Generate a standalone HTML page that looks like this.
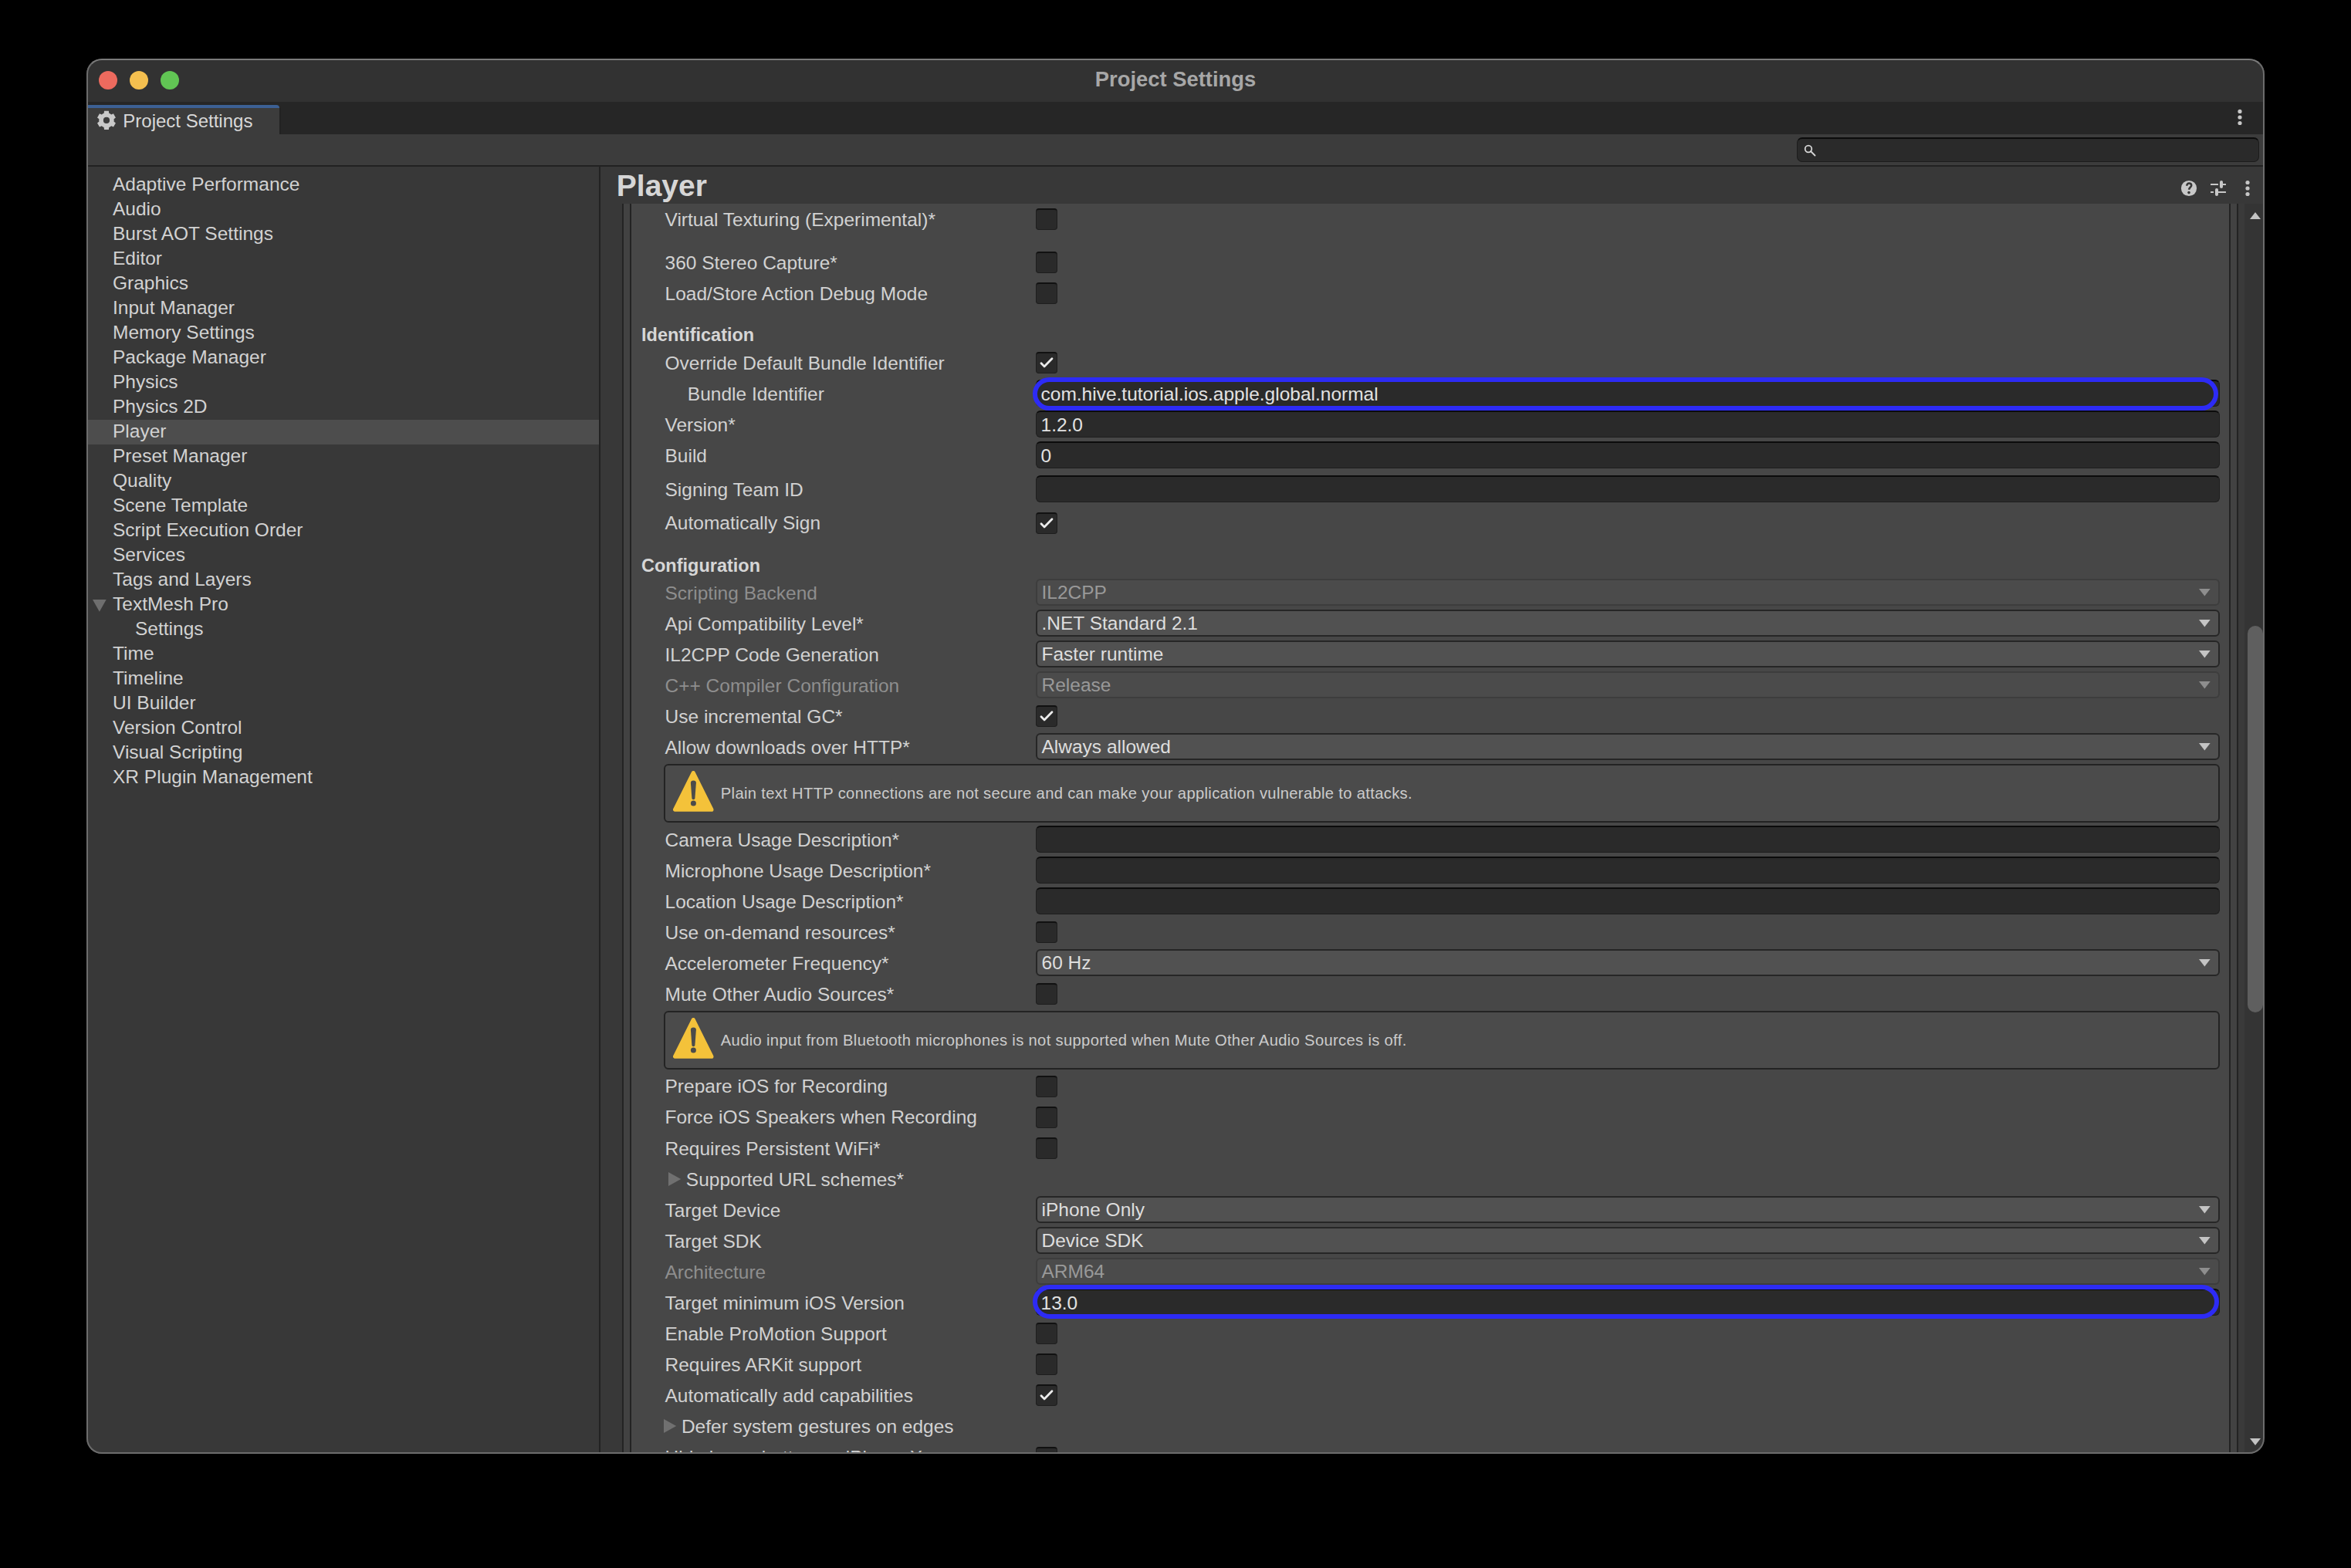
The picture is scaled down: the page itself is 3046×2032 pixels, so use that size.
<!DOCTYPE html>
<html><head><meta charset="utf-8"><style>
html,body{margin:0;padding:0;background:#000;width:3046px;height:2032px;overflow:hidden;font-family:'Liberation Sans', sans-serif;}
#win{position:absolute;left:0;top:0;width:3046px;height:2032px;overflow:hidden;}
#clip{position:absolute;left:112px;top:76px;width:2822px;height:1808px;border-radius:20px;overflow:hidden;}
#inner{position:absolute;left:-112px;top:-76px;width:3046px;height:2032px;}
#border{position:absolute;left:112px;top:76px;width:2822px;height:1808px;box-sizing:border-box;border:2px solid #6c6c6c;border-top-color:#7a7a7a;border-radius:20px;pointer-events:none;}
</style></head><body>
<div id="win"><div id="clip"><div id="inner">
<div style="position:absolute;left:112px;top:76px;width:2822px;height:56px;background:#323232;"></div>
<div style="position:absolute;left:127.8px;top:91.8px;width:24.4px;height:24.4px;border-radius:50%;background:#ed6a5e"></div>
<div style="position:absolute;left:167.8px;top:91.8px;width:24.4px;height:24.4px;border-radius:50%;background:#f4bf4f"></div>
<div style="position:absolute;left:207.8px;top:91.8px;width:24.4px;height:24.4px;border-radius:50%;background:#61c554"></div>
<div style="position:absolute;left:112px;width:2822px;top:82.64px;text-align:center;font-weight:bold;font-size:27.4px;line-height:40px;color:#a7a7a7">Project Settings</div>
<div style="position:absolute;left:112px;top:132px;width:2822px;height:42px;background:#262626;"></div>
<div style="position:absolute;left:362px;top:140px;width:2px;height:34px;background:#222222;"></div>
<div style="position:absolute;left:114px;top:136px;width:248px;height:38px;background:#3c3c3c;border-top:4px solid #3c6094;box-sizing:border-box;border-top-right-radius:4px;"></div>
<svg style="position:absolute;left:125px;top:143px" width="26" height="26" viewBox="-12.96 -12.9 26 26"><polygon points="-3.30,-9.12 -2.95,-12.10 2.95,-12.10 3.30,-9.12 3.70,-8.97 4.09,-8.80 4.47,-8.61 4.85,-8.40 5.22,-8.18 5.57,-7.94 5.92,-7.69 6.25,-7.42 9.00,-8.60 11.95,-3.50 9.55,-1.70 9.62,-1.28 9.66,-0.85 9.69,-0.43 9.70,0.00 9.69,0.43 9.66,0.85 9.62,1.28 9.55,1.70 11.95,3.50 9.00,8.60 6.25,7.42 5.92,7.69 5.57,7.94 5.22,8.18 4.85,8.40 4.47,8.61 4.09,8.80 3.70,8.97 3.30,9.12 2.95,12.10 -2.95,12.10 -3.30,9.12 -3.70,8.97 -4.09,8.80 -4.47,8.61 -4.85,8.40 -5.22,8.18 -5.57,7.94 -5.92,7.69 -6.25,7.42 -9.00,8.60 -11.95,3.50 -9.55,1.70 -9.62,1.28 -9.66,0.85 -9.69,0.43 -9.70,0.00 -9.69,-0.43 -9.66,-0.85 -9.62,-1.28 -9.55,-1.70 -11.95,-3.50 -9.00,-8.60 -6.25,-7.42 -5.92,-7.69 -5.57,-7.94 -5.22,-8.18 -4.85,-8.40 -4.47,-8.61 -4.09,-8.80 -3.70,-8.97" fill="#c9c9c9"/><circle r="4.1" fill="#3c3c3c"/></svg>
<div style="position:absolute;left:159.3px;top:136.68px;font-weight:normal;font-size:24px;line-height:40px;color:#d8d8d8;white-space:nowrap;">Project Settings</div>
<svg style="position:absolute;left:2896px;top:138px" width="12" height="28" viewBox="0 0 12 28" fill="#c6c6c6"><circle cx="6" cy="6.4" r="2.6"/><circle cx="6" cy="14" r="2.6"/><circle cx="6" cy="21.5" r="2.6"/></svg>
<div style="position:absolute;left:112px;top:174px;width:2822px;height:40px;background:#3c3c3c;"></div>
<div style="position:absolute;left:2328px;top:178px;width:599px;height:32px;box-sizing:border-box;background:#2a2a2a;border:1.5px solid #1c1c1c;border-top:2px solid #0b0b0b;border-radius:7px"></div>
<svg style="position:absolute;left:2334px;top:184px" width="22" height="22" viewBox="0 0 22 22"><circle cx="9" cy="9" r="4.3" fill="none" stroke="#d6d6d6" stroke-width="1.8"/><line x1="12" y1="12" x2="17.5" y2="17.5" stroke="#d6d6d6" stroke-width="1.8" stroke-linecap="round"/></svg>
<div style="position:absolute;left:112px;top:214px;width:2822px;height:2px;background:#222222;"></div>
<div style="position:absolute;left:112px;top:216px;width:664px;height:1668px;background:#383838;"></div>
<div style="position:absolute;left:776px;top:216px;width:2px;height:1668px;background:#222222;"></div>
<div style="position:absolute;left:146px;top:218.51px;font-weight:normal;font-size:24.5px;line-height:40px;color:#d2d2d2;white-space:nowrap;">Adaptive Performance</div>
<div style="position:absolute;left:146px;top:250.51px;font-weight:normal;font-size:24.5px;line-height:40px;color:#d2d2d2;white-space:nowrap;">Audio</div>
<div style="position:absolute;left:146px;top:282.51px;font-weight:normal;font-size:24.5px;line-height:40px;color:#d2d2d2;white-space:nowrap;">Burst AOT Settings</div>
<div style="position:absolute;left:146px;top:314.51px;font-weight:normal;font-size:24.5px;line-height:40px;color:#d2d2d2;white-space:nowrap;">Editor</div>
<div style="position:absolute;left:146px;top:346.51px;font-weight:normal;font-size:24.5px;line-height:40px;color:#d2d2d2;white-space:nowrap;">Graphics</div>
<div style="position:absolute;left:146px;top:378.51px;font-weight:normal;font-size:24.5px;line-height:40px;color:#d2d2d2;white-space:nowrap;">Input Manager</div>
<div style="position:absolute;left:146px;top:410.51px;font-weight:normal;font-size:24.5px;line-height:40px;color:#d2d2d2;white-space:nowrap;">Memory Settings</div>
<div style="position:absolute;left:146px;top:442.51px;font-weight:normal;font-size:24.5px;line-height:40px;color:#d2d2d2;white-space:nowrap;">Package Manager</div>
<div style="position:absolute;left:146px;top:474.51px;font-weight:normal;font-size:24.5px;line-height:40px;color:#d2d2d2;white-space:nowrap;">Physics</div>
<div style="position:absolute;left:146px;top:506.51px;font-weight:normal;font-size:24.5px;line-height:40px;color:#d2d2d2;white-space:nowrap;">Physics 2D</div>
<div style="position:absolute;left:112px;top:544px;width:664px;height:32px;background:#4d4d4d;"></div>
<div style="position:absolute;left:146px;top:538.51px;font-weight:normal;font-size:24.5px;line-height:40px;color:#d2d2d2;white-space:nowrap;">Player</div>
<div style="position:absolute;left:146px;top:570.51px;font-weight:normal;font-size:24.5px;line-height:40px;color:#d2d2d2;white-space:nowrap;">Preset Manager</div>
<div style="position:absolute;left:146px;top:602.51px;font-weight:normal;font-size:24.5px;line-height:40px;color:#d2d2d2;white-space:nowrap;">Quality</div>
<div style="position:absolute;left:146px;top:634.51px;font-weight:normal;font-size:24.5px;line-height:40px;color:#d2d2d2;white-space:nowrap;">Scene Template</div>
<div style="position:absolute;left:146px;top:666.51px;font-weight:normal;font-size:24.5px;line-height:40px;color:#d2d2d2;white-space:nowrap;">Script Execution Order</div>
<div style="position:absolute;left:146px;top:698.51px;font-weight:normal;font-size:24.5px;line-height:40px;color:#d2d2d2;white-space:nowrap;">Services</div>
<div style="position:absolute;left:146px;top:730.51px;font-weight:normal;font-size:24.5px;line-height:40px;color:#d2d2d2;white-space:nowrap;">Tags and Layers</div>
<div style="position:absolute;left:146px;top:762.51px;font-weight:normal;font-size:24.5px;line-height:40px;color:#d2d2d2;white-space:nowrap;">TextMesh Pro</div>
<svg style="position:absolute;left:120px;top:777px" width="18" height="16" viewBox="0 0 18 16"><polygon points="0,0 17.7,0 8.85,15.7" fill="#6e6e6e"/></svg>
<div style="position:absolute;left:175px;top:794.51px;font-weight:normal;font-size:24.5px;line-height:40px;color:#d2d2d2;white-space:nowrap;">Settings</div>
<div style="position:absolute;left:146px;top:826.51px;font-weight:normal;font-size:24.5px;line-height:40px;color:#d2d2d2;white-space:nowrap;">Time</div>
<div style="position:absolute;left:146px;top:858.51px;font-weight:normal;font-size:24.5px;line-height:40px;color:#d2d2d2;white-space:nowrap;">Timeline</div>
<div style="position:absolute;left:146px;top:890.51px;font-weight:normal;font-size:24.5px;line-height:40px;color:#d2d2d2;white-space:nowrap;">UI Builder</div>
<div style="position:absolute;left:146px;top:922.51px;font-weight:normal;font-size:24.5px;line-height:40px;color:#d2d2d2;white-space:nowrap;">Version Control</div>
<div style="position:absolute;left:146px;top:954.51px;font-weight:normal;font-size:24.5px;line-height:40px;color:#d2d2d2;white-space:nowrap;">Visual Scripting</div>
<div style="position:absolute;left:146px;top:986.51px;font-weight:normal;font-size:24.5px;line-height:40px;color:#d2d2d2;white-space:nowrap;">XR Plugin Management</div>
<div style="position:absolute;left:778px;top:216px;width:2154px;height:48px;background:#383838;"></div>
<div style="position:absolute;left:798.8px;top:221.49px;font-weight:bold;font-size:39px;line-height:40px;color:#d6d6d6;white-space:nowrap;">Player</div>
<svg style="position:absolute;left:2825px;top:233px" width="22" height="22" viewBox="0 0 22 22"><circle cx="11" cy="11" r="10.1" fill="#c8c8c8"/><path d="M8.3 7.7 C8.3 5.6 9.6 4.5 11.2 4.5 C13.0 4.5 14.2 5.7 14.2 7.3 C14.2 9.3 11.7 10.0 11.0 12.8" fill="none" stroke="#373737" stroke-width="2.6" stroke-linecap="butt"/><circle cx="11" cy="16.6" r="1.8" fill="#373737"/></svg>
<svg style="position:absolute;left:2863px;top:233px" width="22" height="22" viewBox="0 0 22 22" fill="#c8c8c8"><rect x="1" y="5" width="10" height="2" rx="0.5"/><rect x="13" y="1" width="4" height="10" rx="2"/><rect x="16" y="5" width="5" height="2" rx="0.5"/><rect x="1" y="15" width="4" height="2" rx="0.5"/><rect x="7" y="11" width="4" height="10" rx="2"/><rect x="10" y="15" width="11" height="2" rx="0.5"/></svg>
<svg style="position:absolute;left:2906px;top:230px" width="12" height="28" viewBox="0 0 12 28" fill="#c6c6c6"><circle cx="6" cy="6.5" r="2.6"/><circle cx="6" cy="14" r="2.6"/><circle cx="6" cy="21.5" r="2.6"/></svg>
<div style="position:absolute;left:778px;top:264px;width:28px;height:1620px;background:#383838;"></div>
<div style="position:absolute;left:806px;top:264px;width:2px;height:1620px;background:#232323;"></div>
<div style="position:absolute;left:808px;top:264px;width:8px;height:1620px;background:#424242;"></div>
<div style="position:absolute;left:816px;top:264px;width:2px;height:1620px;background:#232323;"></div>
<div style="position:absolute;left:818px;top:264px;width:2070px;height:1620px;background:#474747;"></div>
<div style="position:absolute;left:2888px;top:264px;width:2px;height:1620px;background:#232323;"></div>
<div style="position:absolute;left:2890px;top:264px;width:8px;height:1620px;background:#424242;"></div>
<div style="position:absolute;left:2898px;top:264px;width:2px;height:1620px;background:#232323;"></div>
<div style="position:absolute;left:2900px;top:264px;width:8px;height:1620px;background:#3a3a3a;"></div>
<div style="position:absolute;left:2908px;top:264px;width:24px;height:1620px;background:#343434;"></div>
<div style="position:absolute;left:2912px;top:811px;width:20px;height:501px;border-radius:10px;background:#5f5f5f"></div>
<svg style="position:absolute;left:2915px;top:275px" width="14" height="9" viewBox="0 0 14 9"><polygon points="7,0 14,9 0,9" fill="#c4c4c4"/></svg>
<svg style="position:absolute;left:2915px;top:1864px" width="14" height="9" viewBox="0 0 14 9"><polygon points="0,0 14,0 7,9" fill="#c4c4c4"/></svg>
<div style="position:absolute;left:861.5px;top:264.51px;font-weight:normal;font-size:24.5px;line-height:40px;color:#d2d2d2;white-space:nowrap;">Virtual Texturing (Experimental)*</div>
<div style="position:absolute;left:1342px;top:270px;width:28px;height:28px;box-sizing:border-box;background:#2a2a2a;border:1.5px solid #1e1e1e;border-top:2px solid #111;border-radius:4px"></div>
<div style="position:absolute;left:861.5px;top:320.51px;font-weight:normal;font-size:24.5px;line-height:40px;color:#d2d2d2;white-space:nowrap;">360 Stereo Capture*</div>
<div style="position:absolute;left:1342px;top:326px;width:28px;height:28px;box-sizing:border-box;background:#2a2a2a;border:1.5px solid #1e1e1e;border-top:2px solid #111;border-radius:4px"></div>
<div style="position:absolute;left:861.5px;top:360.51px;font-weight:normal;font-size:24.5px;line-height:40px;color:#d2d2d2;white-space:nowrap;">Load/Store Action Debug Mode</div>
<div style="position:absolute;left:1342px;top:366px;width:28px;height:28px;box-sizing:border-box;background:#2a2a2a;border:1.5px solid #1e1e1e;border-top:2px solid #111;border-radius:4px"></div>
<div style="position:absolute;left:831px;top:413.86px;font-weight:bold;font-size:23.5px;line-height:40px;color:#d6d6d6;white-space:nowrap;">Identification</div>
<div style="position:absolute;left:861.5px;top:450.51px;font-weight:normal;font-size:24.5px;line-height:40px;color:#d2d2d2;white-space:nowrap;">Override Default Bundle Identifier</div>
<div style="position:absolute;left:1342px;top:456px;width:28px;height:28px;box-sizing:border-box;background:#2a2a2a;border:1.5px solid #1e1e1e;border-top:2px solid #111;border-radius:4px"></div>
<svg style="position:absolute;left:1342px;top:456px" width="28" height="28" viewBox="0 0 28 28"><polyline points="7.0,14.7 11.0,18.9 21.0,8.8" fill="none" stroke="#ececec" stroke-width="2.8" stroke-linecap="round" stroke-linejoin="round"/></svg>
<div style="position:absolute;left:890.8px;top:490.51px;font-weight:normal;font-size:24.5px;line-height:40px;color:#d2d2d2;white-space:nowrap;">Bundle Identifier</div>
<div style="position:absolute;left:1342px;top:492px;width:1534px;height:35px;box-sizing:border-box;background:#2a2a2a;border:1.5px solid #1e1e1e;border-top:2px solid #0b0b0b;border-radius:6px"></div>
<div style="position:absolute;left:1348.5px;top:490.51px;font-weight:normal;font-size:24.5px;line-height:40px;color:#e2e2e2;white-space:nowrap;">com.hive.tutorial.ios.apple.global.normal</div>
<div style="position:absolute;left:861.5px;top:530.51px;font-weight:normal;font-size:24.5px;line-height:40px;color:#d2d2d2;white-space:nowrap;">Version*</div>
<div style="position:absolute;left:1342px;top:532px;width:1534px;height:35px;box-sizing:border-box;background:#2a2a2a;border:1.5px solid #1e1e1e;border-top:2px solid #0b0b0b;border-radius:6px"></div>
<div style="position:absolute;left:1348.5px;top:530.51px;font-weight:normal;font-size:24.5px;line-height:40px;color:#e2e2e2;white-space:nowrap;">1.2.0</div>
<div style="position:absolute;left:861.5px;top:570.51px;font-weight:normal;font-size:24.5px;line-height:40px;color:#d2d2d2;white-space:nowrap;">Build</div>
<div style="position:absolute;left:1342px;top:572px;width:1534px;height:35px;box-sizing:border-box;background:#2a2a2a;border:1.5px solid #1e1e1e;border-top:2px solid #0b0b0b;border-radius:6px"></div>
<div style="position:absolute;left:1348.5px;top:570.51px;font-weight:normal;font-size:24.5px;line-height:40px;color:#e2e2e2;white-space:nowrap;">0</div>
<div style="position:absolute;left:861.5px;top:614.51px;font-weight:normal;font-size:24.5px;line-height:40px;color:#d2d2d2;white-space:nowrap;">Signing Team ID</div>
<div style="position:absolute;left:1342px;top:616px;width:1534px;height:35px;box-sizing:border-box;background:#2a2a2a;border:1.5px solid #1e1e1e;border-top:2px solid #0b0b0b;border-radius:6px"></div>
<div style="position:absolute;left:861.5px;top:658.01px;font-weight:normal;font-size:24.5px;line-height:40px;color:#d2d2d2;white-space:nowrap;">Automatically Sign</div>
<div style="position:absolute;left:1342px;top:664px;width:28px;height:28px;box-sizing:border-box;background:#2a2a2a;border:1.5px solid #1e1e1e;border-top:2px solid #111;border-radius:4px"></div>
<svg style="position:absolute;left:1342px;top:664px" width="28" height="28" viewBox="0 0 28 28"><polyline points="7.0,14.7 11.0,18.9 21.0,8.8" fill="none" stroke="#ececec" stroke-width="2.8" stroke-linecap="round" stroke-linejoin="round"/></svg>
<div style="position:absolute;left:831px;top:712.86px;font-weight:bold;font-size:23.5px;line-height:40px;color:#d6d6d6;white-space:nowrap;">Configuration</div>
<div style="position:absolute;left:861.5px;top:748.51px;font-weight:normal;font-size:24.5px;line-height:40px;color:#8e8e8e;white-space:nowrap;">Scripting Backend</div>
<div style="position:absolute;left:1342px;top:750px;width:1534px;height:35px;box-sizing:border-box;background:#4b4b4b;border:2px solid #3d3d3d;border-radius:6px"></div>
<div style="position:absolute;left:1349.5px;top:747.51px;font-weight:normal;font-size:24.5px;line-height:40px;color:#999999;white-space:nowrap;">IL2CPP</div>
<svg style="position:absolute;left:2849px;top:763px" width="15" height="10" viewBox="0 0 15 10"><polygon points="0,0 14.7,0 7.35,9.4" fill="#8e8e8e"/></svg>
<div style="position:absolute;left:861.5px;top:788.51px;font-weight:normal;font-size:24.5px;line-height:40px;color:#d2d2d2;white-space:nowrap;">Api Compatibility Level*</div>
<div style="position:absolute;left:1342px;top:790px;width:1534px;height:35px;box-sizing:border-box;background:#515151;border:2px solid #262626;border-radius:6px"></div>
<div style="position:absolute;left:1349.5px;top:787.51px;font-weight:normal;font-size:24.5px;line-height:40px;color:#dedede;white-space:nowrap;">.NET Standard 2.1</div>
<svg style="position:absolute;left:2849px;top:803px" width="15" height="10" viewBox="0 0 15 10"><polygon points="0,0 14.7,0 7.35,9.4" fill="#c4c4c4"/></svg>
<div style="position:absolute;left:861.5px;top:828.51px;font-weight:normal;font-size:24.5px;line-height:40px;color:#d2d2d2;white-space:nowrap;">IL2CPP Code Generation</div>
<div style="position:absolute;left:1342px;top:830px;width:1534px;height:35px;box-sizing:border-box;background:#515151;border:2px solid #262626;border-radius:6px"></div>
<div style="position:absolute;left:1349.5px;top:827.51px;font-weight:normal;font-size:24.5px;line-height:40px;color:#dedede;white-space:nowrap;">Faster runtime</div>
<svg style="position:absolute;left:2849px;top:843px" width="15" height="10" viewBox="0 0 15 10"><polygon points="0,0 14.7,0 7.35,9.4" fill="#c4c4c4"/></svg>
<div style="position:absolute;left:861.5px;top:868.51px;font-weight:normal;font-size:24.5px;line-height:40px;color:#8e8e8e;white-space:nowrap;">C++ Compiler Configuration</div>
<div style="position:absolute;left:1342px;top:870px;width:1534px;height:35px;box-sizing:border-box;background:#4b4b4b;border:2px solid #3d3d3d;border-radius:6px"></div>
<div style="position:absolute;left:1349.5px;top:867.51px;font-weight:normal;font-size:24.5px;line-height:40px;color:#999999;white-space:nowrap;">Release</div>
<svg style="position:absolute;left:2849px;top:883px" width="15" height="10" viewBox="0 0 15 10"><polygon points="0,0 14.7,0 7.35,9.4" fill="#8e8e8e"/></svg>
<div style="position:absolute;left:861.5px;top:908.51px;font-weight:normal;font-size:24.5px;line-height:40px;color:#d2d2d2;white-space:nowrap;">Use incremental GC*</div>
<div style="position:absolute;left:1342px;top:914px;width:28px;height:28px;box-sizing:border-box;background:#2a2a2a;border:1.5px solid #1e1e1e;border-top:2px solid #111;border-radius:4px"></div>
<svg style="position:absolute;left:1342px;top:914px" width="28" height="28" viewBox="0 0 28 28"><polyline points="7.0,14.7 11.0,18.9 21.0,8.8" fill="none" stroke="#ececec" stroke-width="2.8" stroke-linecap="round" stroke-linejoin="round"/></svg>
<div style="position:absolute;left:861.5px;top:948.51px;font-weight:normal;font-size:24.5px;line-height:40px;color:#d2d2d2;white-space:nowrap;">Allow downloads over HTTP*</div>
<div style="position:absolute;left:1342px;top:950px;width:1534px;height:35px;box-sizing:border-box;background:#515151;border:2px solid #262626;border-radius:6px"></div>
<div style="position:absolute;left:1349.5px;top:947.51px;font-weight:normal;font-size:24.5px;line-height:40px;color:#dedede;white-space:nowrap;">Always allowed</div>
<svg style="position:absolute;left:2849px;top:963px" width="15" height="10" viewBox="0 0 15 10"><polygon points="0,0 14.7,0 7.35,9.4" fill="#c4c4c4"/></svg>
<div style="position:absolute;left:860px;top:990px;width:2016px;height:76px;box-sizing:border-box;background:#4b4b4b;border:2px solid #232323;border-radius:6px"></div>
<svg style="position:absolute;left:871.6px;top:999.4px" width="53" height="54" viewBox="0 0 53 54"><polygon points="26.25,2.6 2.6,50.2 49.9,50.2" fill="#f4c23a" stroke="#f4c23a" stroke-width="5.2" stroke-linejoin="round"/><path d="M22.9 15.6 Q22.9 12.6 26.4 12.6 Q29.9 12.6 29.9 15.6 L28.4 35.6 Q28.2 37.2 26.4 37.2 Q24.6 37.2 24.4 35.6 Z" fill="#4b4b4b"/><circle cx="26.4" cy="42" r="3.5" fill="#4b4b4b"/></svg>
<div style="position:absolute;left:933.8px;top:1008.00px;font-weight:normal;font-size:20.2px;line-height:40px;color:#cbcbcb;white-space:nowrap;letter-spacing:0.33px;">Plain text HTTP connections are not secure and can make your application vulnerable to attacks.</div>
<div style="position:absolute;left:861.5px;top:1068.51px;font-weight:normal;font-size:24.5px;line-height:40px;color:#d2d2d2;white-space:nowrap;">Camera Usage Description*</div>
<div style="position:absolute;left:1342px;top:1070px;width:1534px;height:35px;box-sizing:border-box;background:#2a2a2a;border:1.5px solid #1e1e1e;border-top:2px solid #0b0b0b;border-radius:6px"></div>
<div style="position:absolute;left:861.5px;top:1108.51px;font-weight:normal;font-size:24.5px;line-height:40px;color:#d2d2d2;white-space:nowrap;">Microphone Usage Description*</div>
<div style="position:absolute;left:1342px;top:1110px;width:1534px;height:35px;box-sizing:border-box;background:#2a2a2a;border:1.5px solid #1e1e1e;border-top:2px solid #0b0b0b;border-radius:6px"></div>
<div style="position:absolute;left:861.5px;top:1148.51px;font-weight:normal;font-size:24.5px;line-height:40px;color:#d2d2d2;white-space:nowrap;">Location Usage Description*</div>
<div style="position:absolute;left:1342px;top:1150px;width:1534px;height:35px;box-sizing:border-box;background:#2a2a2a;border:1.5px solid #1e1e1e;border-top:2px solid #0b0b0b;border-radius:6px"></div>
<div style="position:absolute;left:861.5px;top:1188.51px;font-weight:normal;font-size:24.5px;line-height:40px;color:#d2d2d2;white-space:nowrap;">Use on-demand resources*</div>
<div style="position:absolute;left:1342px;top:1194px;width:28px;height:28px;box-sizing:border-box;background:#2a2a2a;border:1.5px solid #1e1e1e;border-top:2px solid #111;border-radius:4px"></div>
<div style="position:absolute;left:861.5px;top:1228.51px;font-weight:normal;font-size:24.5px;line-height:40px;color:#d2d2d2;white-space:nowrap;">Accelerometer Frequency*</div>
<div style="position:absolute;left:1342px;top:1230px;width:1534px;height:35px;box-sizing:border-box;background:#515151;border:2px solid #262626;border-radius:6px"></div>
<div style="position:absolute;left:1349.5px;top:1227.51px;font-weight:normal;font-size:24.5px;line-height:40px;color:#dedede;white-space:nowrap;">60 Hz</div>
<svg style="position:absolute;left:2849px;top:1243px" width="15" height="10" viewBox="0 0 15 10"><polygon points="0,0 14.7,0 7.35,9.4" fill="#c4c4c4"/></svg>
<div style="position:absolute;left:861.5px;top:1268.51px;font-weight:normal;font-size:24.5px;line-height:40px;color:#d2d2d2;white-space:nowrap;">Mute Other Audio Sources*</div>
<div style="position:absolute;left:1342px;top:1274px;width:28px;height:28px;box-sizing:border-box;background:#2a2a2a;border:1.5px solid #1e1e1e;border-top:2px solid #111;border-radius:4px"></div>
<div style="position:absolute;left:860px;top:1310px;width:2016px;height:76px;box-sizing:border-box;background:#4b4b4b;border:2px solid #232323;border-radius:6px"></div>
<svg style="position:absolute;left:871.6px;top:1319.4px" width="53" height="54" viewBox="0 0 53 54"><polygon points="26.25,2.6 2.6,50.2 49.9,50.2" fill="#f4c23a" stroke="#f4c23a" stroke-width="5.2" stroke-linejoin="round"/><path d="M22.9 15.6 Q22.9 12.6 26.4 12.6 Q29.9 12.6 29.9 15.6 L28.4 35.6 Q28.2 37.2 26.4 37.2 Q24.6 37.2 24.4 35.6 Z" fill="#4b4b4b"/><circle cx="26.4" cy="42" r="3.5" fill="#4b4b4b"/></svg>
<div style="position:absolute;left:933.8px;top:1328.00px;font-weight:normal;font-size:20.2px;line-height:40px;color:#cbcbcb;white-space:nowrap;letter-spacing:0.33px;">Audio input from Bluetooth microphones is not supported when Mute Other Audio Sources is off.</div>
<div style="position:absolute;left:861.5px;top:1387.51px;font-weight:normal;font-size:24.5px;line-height:40px;color:#d2d2d2;white-space:nowrap;">Prepare iOS for Recording</div>
<div style="position:absolute;left:1342px;top:1394px;width:28px;height:28px;box-sizing:border-box;background:#2a2a2a;border:1.5px solid #1e1e1e;border-top:2px solid #111;border-radius:4px"></div>
<div style="position:absolute;left:861.5px;top:1427.51px;font-weight:normal;font-size:24.5px;line-height:40px;color:#d2d2d2;white-space:nowrap;">Force iOS Speakers when Recording</div>
<div style="position:absolute;left:1342px;top:1434px;width:28px;height:28px;box-sizing:border-box;background:#2a2a2a;border:1.5px solid #1e1e1e;border-top:2px solid #111;border-radius:4px"></div>
<div style="position:absolute;left:861.5px;top:1468.51px;font-weight:normal;font-size:24.5px;line-height:40px;color:#d2d2d2;white-space:nowrap;">Requires Persistent WiFi*</div>
<div style="position:absolute;left:1342px;top:1474px;width:28px;height:28px;box-sizing:border-box;background:#2a2a2a;border:1.5px solid #1e1e1e;border-top:2px solid #111;border-radius:4px"></div>
<svg style="position:absolute;left:865.5px;top:1519px" width="17" height="19" viewBox="0 0 17 19"><polygon points="0,0 16.2,9 0,18" fill="#707070"/></svg>
<div style="position:absolute;left:888.8px;top:1508.51px;font-weight:normal;font-size:24.5px;line-height:40px;color:#d2d2d2;white-space:nowrap;">Supported URL schemes*</div>
<div style="position:absolute;left:861.5px;top:1548.51px;font-weight:normal;font-size:24.5px;line-height:40px;color:#d2d2d2;white-space:nowrap;">Target Device</div>
<div style="position:absolute;left:1342px;top:1550px;width:1534px;height:35px;box-sizing:border-box;background:#515151;border:2px solid #262626;border-radius:6px"></div>
<div style="position:absolute;left:1349.5px;top:1547.51px;font-weight:normal;font-size:24.5px;line-height:40px;color:#dedede;white-space:nowrap;">iPhone Only</div>
<svg style="position:absolute;left:2849px;top:1563px" width="15" height="10" viewBox="0 0 15 10"><polygon points="0,0 14.7,0 7.35,9.4" fill="#c4c4c4"/></svg>
<div style="position:absolute;left:861.5px;top:1588.51px;font-weight:normal;font-size:24.5px;line-height:40px;color:#d2d2d2;white-space:nowrap;">Target SDK</div>
<div style="position:absolute;left:1342px;top:1590px;width:1534px;height:35px;box-sizing:border-box;background:#515151;border:2px solid #262626;border-radius:6px"></div>
<div style="position:absolute;left:1349.5px;top:1587.51px;font-weight:normal;font-size:24.5px;line-height:40px;color:#dedede;white-space:nowrap;">Device SDK</div>
<svg style="position:absolute;left:2849px;top:1603px" width="15" height="10" viewBox="0 0 15 10"><polygon points="0,0 14.7,0 7.35,9.4" fill="#c4c4c4"/></svg>
<div style="position:absolute;left:861.5px;top:1628.51px;font-weight:normal;font-size:24.5px;line-height:40px;color:#8e8e8e;white-space:nowrap;">Architecture</div>
<div style="position:absolute;left:1342px;top:1630px;width:1534px;height:35px;box-sizing:border-box;background:#4b4b4b;border:2px solid #3d3d3d;border-radius:6px"></div>
<div style="position:absolute;left:1349.5px;top:1627.51px;font-weight:normal;font-size:24.5px;line-height:40px;color:#999999;white-space:nowrap;">ARM64</div>
<svg style="position:absolute;left:2849px;top:1643px" width="15" height="10" viewBox="0 0 15 10"><polygon points="0,0 14.7,0 7.35,9.4" fill="#8e8e8e"/></svg>
<div style="position:absolute;left:861.5px;top:1668.51px;font-weight:normal;font-size:24.5px;line-height:40px;color:#d2d2d2;white-space:nowrap;">Target minimum iOS Version</div>
<div style="position:absolute;left:1342px;top:1670px;width:1534px;height:35px;box-sizing:border-box;background:#2a2a2a;border:1.5px solid #1e1e1e;border-top:2px solid #0b0b0b;border-radius:6px"></div>
<div style="position:absolute;left:1348.5px;top:1668.51px;font-weight:normal;font-size:24.5px;line-height:40px;color:#e2e2e2;white-space:nowrap;">13.0</div>
<div style="position:absolute;left:861.5px;top:1708.51px;font-weight:normal;font-size:24.5px;line-height:40px;color:#d2d2d2;white-space:nowrap;">Enable ProMotion Support</div>
<div style="position:absolute;left:1342px;top:1714px;width:28px;height:28px;box-sizing:border-box;background:#2a2a2a;border:1.5px solid #1e1e1e;border-top:2px solid #111;border-radius:4px"></div>
<div style="position:absolute;left:861.5px;top:1748.51px;font-weight:normal;font-size:24.5px;line-height:40px;color:#d2d2d2;white-space:nowrap;">Requires ARKit support</div>
<div style="position:absolute;left:1342px;top:1754px;width:28px;height:28px;box-sizing:border-box;background:#2a2a2a;border:1.5px solid #1e1e1e;border-top:2px solid #111;border-radius:4px"></div>
<div style="position:absolute;left:861.5px;top:1788.51px;font-weight:normal;font-size:24.5px;line-height:40px;color:#d2d2d2;white-space:nowrap;">Automatically add capabilities</div>
<div style="position:absolute;left:1342px;top:1794px;width:28px;height:28px;box-sizing:border-box;background:#2a2a2a;border:1.5px solid #1e1e1e;border-top:2px solid #111;border-radius:4px"></div>
<svg style="position:absolute;left:1342px;top:1794px" width="28" height="28" viewBox="0 0 28 28"><polyline points="7.0,14.7 11.0,18.9 21.0,8.8" fill="none" stroke="#ececec" stroke-width="2.8" stroke-linecap="round" stroke-linejoin="round"/></svg>
<svg style="position:absolute;left:860.2px;top:1839px" width="17" height="19" viewBox="0 0 17 19"><polygon points="0,0 16.2,9 0,18" fill="#707070"/></svg>
<div style="position:absolute;left:882.9px;top:1828.51px;font-weight:normal;font-size:24.5px;line-height:40px;color:#d2d2d2;white-space:nowrap;">Defer system gestures on edges</div>
<div style="position:absolute;left:861.5px;top:1868.51px;font-weight:normal;font-size:24.5px;line-height:40px;color:#d2d2d2;white-space:nowrap;">Hide home button on iPhone X</div>
<div style="position:absolute;left:1342px;top:1875px;width:28px;height:28px;box-sizing:border-box;background:#2a2a2a;border:1.5px solid #1e1e1e;border-top:2px solid #111;border-radius:4px"></div>
<div style="position:absolute;left:1338.3px;top:488.5px;width:1535.5px;height:43.3px;box-sizing:border-box;border:6.3px solid #2d2bf5;border-radius:22px"></div>
<div style="position:absolute;left:1338.3px;top:1665px;width:1536.7px;height:43.9px;box-sizing:border-box;border:6.3px solid #2d2bf5;border-radius:22px"></div>
</div></div><div id="border"></div></div>
</body></html>
